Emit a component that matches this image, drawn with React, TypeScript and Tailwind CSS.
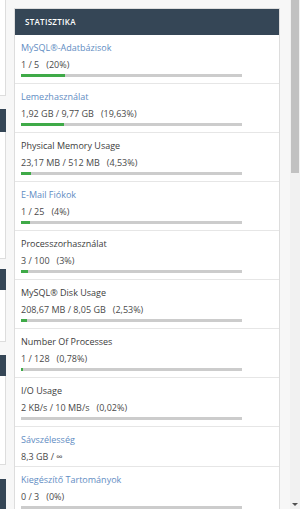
import React from 'react';

type Stat = {
  title: string;
  value: string;
  pct?: string;
  fill?: number;
  link?: boolean;
};

const stats: Stat[] = [
  { title: 'MySQL®-Adatbázisok', value: '1 / 5', pct: '(20%)', fill: 20, link: true },
  { title: 'Lemezhasználat', value: '1,92 GB / 9,77 GB', pct: '(19,63%)', fill: 19.63, link: true },
  { title: 'Physical Memory Usage', value: '23,17 MB / 512 MB', pct: '(4,53%)', fill: 4.53 },
  { title: 'E-Mail Fiókok', value: '1 / 25', pct: '(4%)', fill: 4, link: true },
  { title: 'Processzorhasználat', value: '3 / 100', pct: '(3%)', fill: 3 },
  { title: 'MySQL® Disk Usage', value: '208,67 MB / 8,05 GB', pct: '(2,53%)', fill: 2.53 },
  { title: 'Number Of Processes', value: '1 / 128', pct: '(0,78%)', fill: 0.78 },
  { title: 'I/O Usage', value: '2 KB/s / 10 MB/s', pct: '(0,02%)', fill: 0.02 },
  { title: 'Sávszélesség', value: '8,3 GB / ∞', link: true },
  { title: 'Kiegészítő Tartományok', value: '0 / 3', pct: '(0%)', fill: 0, link: true },
];

function StatRow({ stat }: { stat: Stat }) {
  const hasBar = stat.fill !== undefined;
  return (
    <div className={`border-b border-[#e6e6e6] px-[6px] pt-[6px] ${hasBar ? 'pb-[6px]' : 'pb-[2px]'}`}>
      <div className={`leading-[14px] ${stat.link ? 'text-[#5f8dc3]' : 'text-[#3c3c3c]'}`}>{stat.title}</div>
      <div className="mt-[3px] leading-[14px] text-[#4a4a4a]">
        {stat.value}
        {stat.pct && <span className="ml-[7px]">{stat.pct}</span>}
      </div>
      {hasBar && (
        <div className="mt-[2px] h-[3px] w-[221px] bg-[#cccccc]">
          <div className="h-full bg-[#3faa48]" style={{ width: `${stat.fill}%` }} />
        </div>
      )}
    </div>
  );
}

export default function App() {
  return (
    <div
      className="flex h-[509px] w-[300px] overflow-hidden bg-[#f7f7f7] text-[9px]"
      style={{ fontFamily: '"Open Sans", "Liberation Sans", sans-serif' }}
    >
      {/* Left column, mostly off screen */}
      <div className="flex w-[6px] shrink-0 flex-col">
        <div className="h-[97px] border-b border-r border-[#dddddd] bg-white" />
        <div className="mt-[13px] h-[23px] bg-[#354656]" />
        <div className="h-[129px] border-b border-r border-[#dddddd] bg-white" />
        <div className="mt-[10px] h-[21px] bg-[#354656]" />
        <div className="h-[52px] border-b border-r border-[#dddddd] bg-white" />
        <div className="mt-[13px] h-[22px] bg-[#354656]" />
        <div className="h-[90px] border-b border-r border-[#dddddd] bg-white" />
        <div className="mt-[14px] h-[30px] bg-[#354656]" />
      </div>

      {/* Stats panel */}
      <div className="ml-[8px] mt-[8px] w-[266px] shrink-0 self-start border border-[#dddddd] bg-white">
        <div className="flex h-[26px] items-center bg-[#354656] px-[10px] text-[8px] font-semibold tracking-[0.3px] text-white">
          STATISZTIKA
        </div>
        {stats.map((s) => (
          <StatRow key={s.title} stat={s} />
        ))}
      </div>

      <div className="flex-1" />

      {/* Scrollbar */}
      <div className="flex w-[10px] shrink-0 flex-col bg-[#f1f1f1]">
        <div className="mx-[1px] h-[173px] bg-[#c1c1c1]" />
        <div className="flex-1" />
        <div className="flex h-[10px] items-center justify-center">
          <div className="h-0 w-0 border-x-[3px] border-t-[3px] border-x-transparent border-t-[#505050]" />
        </div>
      </div>
    </div>
  );
}
